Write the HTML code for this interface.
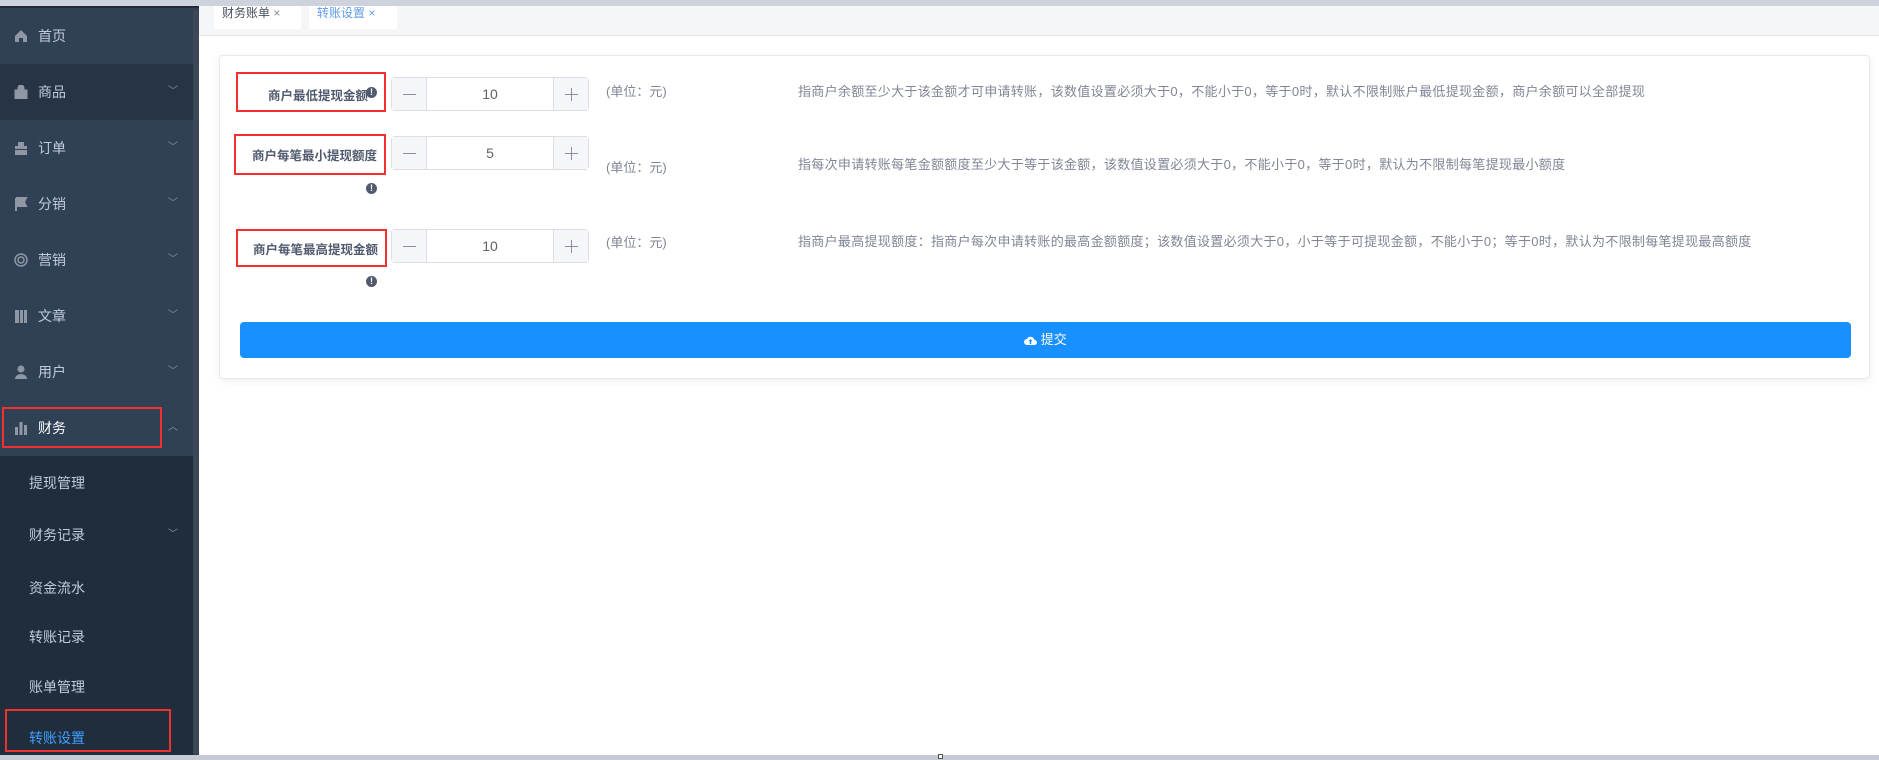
<!DOCTYPE html>
<html><head><meta charset="utf-8"><style>
*{margin:0;padding:0;box-sizing:border-box}
body{width:1879px;height:760px;overflow:hidden;background:#fff;font-family:"Liberation Sans","Noto Sans CJK SC",sans-serif;position:relative}
.topbar{position:absolute;left:0;top:0;width:1879px;height:6px;background:#cdd2dc}
.botbar{position:absolute;left:0;top:755px;width:1879px;height:5px;background:#c5cad4}
.side{position:absolute;left:0;top:6px;width:199px;height:749px;background:#304156;border-top:2px solid #232a35}
.scroll{position:absolute;left:193px;top:10px;width:6px;height:745px;background:#3c4758;border-radius:3px}
.mi{position:absolute;left:0;width:193px;height:56px;color:#bfcbd9;font-size:14px;line-height:56px;padding-left:38px}
.mi svg{position:absolute;left:14px;top:21px}
.mi .ar{position:absolute;left:168px;top:0;font-size:10px;color:#8b95a5}
.sub{position:absolute;left:0;top:456px;width:193px;height:299px;background:#1f2d3d}
.si{position:absolute;left:29px;color:#bfcbd9;font-size:14px}
.red{position:absolute;border:2px solid #f23030}
.tabs{position:absolute;left:199px;top:6px;width:1680px;height:30px;background:#f5f6f8;border-bottom:1px solid #e6e8ec}
.tab{position:absolute;top:0;height:23px;background:#fff;font-size:12px;line-height:14px;padding:0 8px;color:#495060}
.card{position:absolute;left:219px;top:55px;width:1651px;height:324px;border:1px solid #e8eaee;border-radius:4px;box-shadow:0 2px 8px rgba(0,0,0,.07);background:#fff}
.lab{position:absolute;font-size:12.5px;font-weight:bold;color:#515a6e;text-align:right}
.num{position:absolute;left:391px;width:198px;height:34px;border:1px solid #dcdee2;border-radius:4px;background:#fff}
.num .m,.num .p{position:absolute;top:0;width:35px;height:32px;background:#f5f6f9}
.num .m{left:0;border-right:1px solid #dcdee2}
.num .p{right:0;border-left:1px solid #dcdee2}
.num svg{position:absolute;left:11px;top:10px}
.num .v{position:absolute;left:35px;right:35px;top:0;line-height:32px;text-align:center;font-size:14px;color:#606266}
.unit{position:absolute;left:606px;font-size:13px;color:#808695}
.desc{position:absolute;left:798px;font-size:13px;letter-spacing:0.3px;color:#808695}
.ic{position:absolute;width:11px;height:11px;border-radius:50%;background:#515a6e;color:#fff;font-size:9px;font-weight:bold;line-height:11px;text-align:center}
.btn{position:absolute;left:240px;top:322px;width:1611px;height:36px;background:#1890ff;border-radius:4px;color:#fff;font-size:13px;text-align:center;line-height:36px}
</style></head><body>
<div class="topbar"></div>
<div class="side">
<div class="mi" style="top:0"><svg width="14" height="14" viewBox="0 0 14 14"><path d="M7 1L1 7v6h4V9h4v4h4V7z" fill="#8f97a4"/></svg>首页</div>
<div class="mi" style="top:56px;background:#263445;width:199px"><svg width="14" height="14" viewBox="0 0 14 14"><path d="M1 5h12v9H1z M4 5V3a3 3 0 016 0v2" fill="#8f97a4" stroke="#8f97a4"/></svg>商品<span class="ar">﹀</span></div>
<div class="mi" style="top:112px"><svg width="14" height="14" viewBox="0 0 14 14"><path d="M4 1h6v4H4zM1 5h12v3H1zM1 9h12v5H1z" fill="#8f97a4"/></svg>订单<span class="ar">﹀</span></div>
<div class="mi" style="top:168px"><svg width="14" height="14" viewBox="0 0 14 14"><path d="M2 1v13M2 1h10l-2 4 2 4H2" fill="#8f97a4" stroke="#8f97a4" stroke-width="2"/></svg>分销<span class="ar">﹀</span></div>
<div class="mi" style="top:224px"><svg width="14" height="14" viewBox="0 0 14 14"><circle cx="7" cy="7" r="6" fill="none" stroke="#8f97a4" stroke-width="1.5"/><circle cx="7" cy="7" r="3" fill="none" stroke="#8f97a4" stroke-width="1.5"/></svg>营销<span class="ar">﹀</span></div>
<div class="mi" style="top:280px"><svg width="14" height="14" viewBox="0 0 14 14"><path d="M1 1h4v13H1zM6 1h3v13H6zM10 1h3v13h-3z" fill="#8f97a4"/></svg>文章<span class="ar">﹀</span></div>
<div class="mi" style="top:336px"><svg width="14" height="14" viewBox="0 0 14 14"><circle cx="7" cy="4" r="3.5" fill="#8f97a4"/><path d="M1 14a6 5 0 0112 0z" fill="#8f97a4"/></svg>用户<span class="ar">﹀</span></div>
<div class="mi" style="top:392px;color:#fff"><svg width="14" height="14" viewBox="0 0 14 14"><path d="M1 6h3v8H1zM5.5 1h3v13h-3zM10 4h3v10h-3z" fill="#8f97a4"/></svg>财务<span class="ar">︿</span></div>
</div>
<div class="sub">
<div class="si" style="top:17px">提现管理</div>
<div class="si" style="top:69px">财务记录</div><div style="position:absolute;left:168px;top:69px;font-size:10px;color:#8b95a5">﹀</div>
<div class="si" style="top:122px">资金流水</div>
<div class="si" style="top:171px">转账记录</div>
<div class="si" style="top:221px">账单管理</div>
<div class="si" style="top:272px;color:#409eff">转账设置</div>
</div>
<div class="scroll"></div>
<div class="red" style="left:2px;top:407px;width:160px;height:41px"></div>
<div class="red" style="left:5px;top:709px;width:166px;height:43px"></div>

<div class="tabs">
<div class="tab" style="left:15px;width:87px">财务账单 <span style="color:#888">×</span></div>
<div class="tab" style="left:110px;width:88px;color:#5d9cec">转账设置 <span>×</span></div>
</div>

<div class="card"></div>
<div class="red" style="left:236px;top:72px;width:150px;height:40px"></div>
<div class="lab" style="left:240px;top:85px;width:128px">商户最低提现金额</div><div class="ic" style="left:366px;top:87px">!</div>
<div class="num" style="top:77px"><div class="m"><svg width="13" height="13"><path d="M0 6.5h13" stroke="#8a8f99"/></svg></div><div class="v">10</div><div class="p"><svg width="13" height="13"><path d="M0 6.5h13M6.5 0v13" stroke="#8a8f99"/></svg></div></div>
<div class="unit" style="top:81px">(单位：元)</div>
<div class="desc" style="top:81px">指商户余额至少大于该金额才可申请转账，该数值设置必须大于0，不能小于0，等于0时，默认不限制账户最低提现金额，商户余额可以全部提现</div>

<div class="red" style="left:234px;top:134px;width:152px;height:41px"></div>
<div class="lab" style="left:240px;top:145px;width:137px">商户每笔最小提现额度</div><div class="ic" style="left:366px;top:183px">!</div>
<div class="num" style="top:136px"><div class="m"><svg width="13" height="13"><path d="M0 6.5h13" stroke="#8a8f99"/></svg></div><div class="v">5</div><div class="p"><svg width="13" height="13"><path d="M0 6.5h13M6.5 0v13" stroke="#8a8f99"/></svg></div></div>
<div class="unit" style="top:157px">(单位：元)</div>
<div class="desc" style="top:154px">指每次申请转账每笔金额额度至少大于等于该金额，该数值设置必须大于0，不能小于0，等于0时，默认为不限制每笔提现最小额度</div>

<div class="red" style="left:236px;top:229px;width:151px;height:38px"></div>
<div class="lab" style="left:240px;top:239px;width:138px">商户每笔最高提现金额</div><div class="ic" style="left:366px;top:276px">!</div>
<div class="num" style="top:229px"><div class="m"><svg width="13" height="13"><path d="M0 6.5h13" stroke="#8a8f99"/></svg></div><div class="v">10</div><div class="p"><svg width="13" height="13"><path d="M0 6.5h13M6.5 0v13" stroke="#8a8f99"/></svg></div></div>
<div class="unit" style="top:232px">(单位：元)</div>
<div class="desc" style="top:231px">指商户最高提现额度：指商户每次申请转账的最高金额额度；该数值设置必须大于0，小于等于可提现金额，不能小于0；等于0时，默认为不限制每笔提现最高额度</div>

<div class="btn"><svg width="13" height="10" viewBox="0 0 13 10" style="vertical-align:-1px"><path d="M3 10a3 3 0 010-6 4 4 0 017.5 1A2.5 2.5 0 0110.5 10z" fill="#fff"/><path d="M6.5 4l-2 2.2h1.3V9h1.4V6.2h1.3z" fill="#1890ff"/></svg> 提交</div>
<div class="botbar"></div>
<div style="position:absolute;left:938px;top:754px;width:5px;height:5px;border:1px solid #555;background:#fff"></div>
</body></html>
